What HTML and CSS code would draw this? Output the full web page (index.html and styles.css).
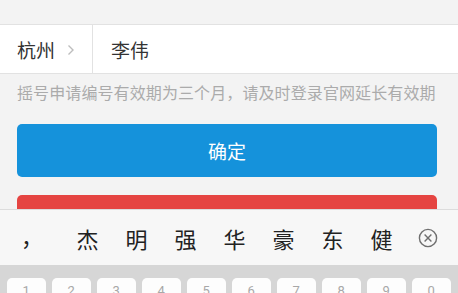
FILE: index.html
```html
<!DOCTYPE html>
<html lang="zh-CN">
<head>
<meta charset="utf-8">
<title>摇号申请</title>
<link rel="stylesheet" href="styles.css">
</head>
<body>
<div class="screen">
  <div class="content">
    <div class="top-gap"></div>
    <div class="row">
      <div class="city">
        <span>杭州</span>
        <svg class="chev" width="8" height="12" viewBox="0 0 8 12"><polyline points="1.5,1.5 6,6 1.5,10.5" fill="none" stroke="#bdbdbd" stroke-width="1.4"/></svg>
      </div>
      <div class="name">李伟</div>
    </div>
    <p class="hint">摇号申请编号有效期为三个月，请及时登录官网延长有效期</p>
    <div class="btn btn-blue">确定</div>
    <div class="btn btn-red"></div>
  </div>
  <div class="keyboard">
    <div class="cands">
      <span class="comma">，</span>
      <span class="cand">杰</span>
      <span class="cand">明</span>
      <span class="cand">强</span>
      <span class="cand">华</span>
      <span class="cand">豪</span>
      <span class="cand">东</span>
      <span class="cand">健</span>
      <span class="del">
        <svg width="20" height="20" viewBox="0 0 20 20"><circle cx="10" cy="10" r="8.6" fill="none" stroke="#6f6f6f" stroke-width="1.4"/><path d="M6.6 6.6 L13.4 13.4 M13.4 6.6 L6.6 13.4" stroke="#6f6f6f" stroke-width="1.4"/></svg>
      </span>
    </div>
    <div class="keys">
      <div class="key">1</div>
      <div class="key">2</div>
      <div class="key">3</div>
      <div class="key">4</div>
      <div class="key">5</div>
      <div class="key">6</div>
      <div class="key">7</div>
      <div class="key">8</div>
      <div class="key">9</div>
      <div class="key">0</div>
    </div>
  </div>
</div>
</body>
</html>
```
FILE: styles.css
```css
* { box-sizing: border-box; }
html, body {
  margin: 0;
  padding: 0;
  background: #f3f3f3;
  font-family: "Noto Sans CJK SC", "Noto Sans", sans-serif;
}
.screen {
  width: 458px;
  height: 293px;
  display: flex;
  flex-direction: column;
  overflow: hidden;
}
.content {
  height: 209px;
  flex: none;
  overflow: hidden;
}
.top-gap {
  height: 25px;
  border-bottom: 1px solid #e2e2e2;
}
.row {
  height: 49px;
  background: #fff;
  border-bottom: 1px solid #e2e2e2;
  display: flex;
  align-items: stretch;
  font-size: 19px;
  color: #333;
}
.city {
  width: 93px;
  padding-left: 17px;
  border-right: 1px solid #e2e2e2;
  display: flex;
  align-items: center;
  gap: 12px;
}
.chev { margin-top: 1px; }
.name {
  padding-left: 18px;
  display: flex;
  align-items: center;
}
.hint {
  margin: 9px 0 0;
  padding: 0 0 0 17px;
  font-size: 16px;
  line-height: 18px;
  letter-spacing: 0.1px;
  color: #ababab;
  white-space: nowrap;
}
.btn {
  margin: 0 21px 0 17px;
  height: 53px;
  border-radius: 5px;
  display: flex;
  align-items: center;
  justify-content: center;
  color: #fff;
  font-size: 19px;
}
.btn-blue {
  margin-top: 23px;
  background: #1592db;
}
.btn-red {
  margin-top: 18px;
  background: #e54441;
}
.keyboard {
  flex: 1;
  display: flex;
  flex-direction: column;
  border-top: 1px solid #dcdcdc;
}
.cands {
  height: 55px;
  background: #f7f7f7;
  display: flex;
  align-items: center;
  font-size: 22px;
  color: #222;
}
.comma {
  width: 63px;
  padding-left: 21px;
  margin-top: -4px;
}
.cand {
  width: 49px;
  text-align: center;
}
.del {
  width: 44px;
  display: flex;
  justify-content: center;
  align-items: center;
}
.keys {
  flex: 1;
  background: #d6d6d6;
  padding: 13px 7px 0;
  display: flex;
  gap: 6.5px;
}
.key {
  width: 38.5px;
  height: 40px;
  background: #fdfdfd;
  border-radius: 5px;
  text-align: center;
  font-family: "Roboto", sans-serif;
  font-size: 13px;
  line-height: 13px;
  padding-top: 6px;
  color: #a8a8a8;
}
```
